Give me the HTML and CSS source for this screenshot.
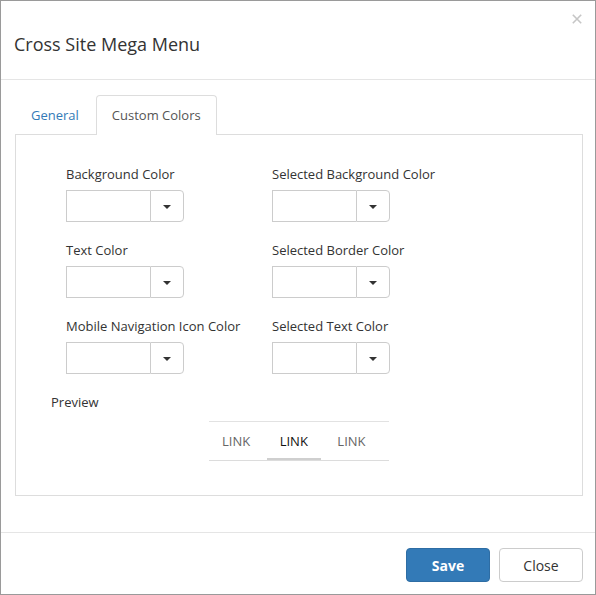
FILE: index.html
```html
<!DOCTYPE html>
<html>
<head>
<meta charset="utf-8">
<title>Cross Site Mega Menu</title>
<link rel="stylesheet" href="styles.css">
</head>
<body>
<div class="dialog">
  <div class="header">
    <h4 class="title">Cross Site Mega Menu</h4>
    <button class="close" aria-label="Close">
      <svg width="10" height="10" viewBox="0 0 10 10"><path d="M0.8 0.8 L9.2 9.2 M9.2 0.8 L0.8 9.2" stroke="#c6c6c6" stroke-width="1.6" fill="none"/></svg>
    </button>
  </div>
  <div class="body">
    <ul class="tabs">
      <li class="tab"><a href="#">General</a></li>
      <li class="tab active"><a href="#">Custom Colors</a></li>
    </ul>
    <div class="pane">
      <div class="grid">
        <div class="field">
          <label>Background Color</label>
          <div class="picker"><span class="input"></span><span class="btn"><i class="caret"></i></span></div>
        </div>
        <div class="field">
          <label>Selected Background Color</label>
          <div class="picker"><span class="input"></span><span class="btn"><i class="caret"></i></span></div>
        </div>
        <div class="field">
          <label>Text Color</label>
          <div class="picker"><span class="input"></span><span class="btn"><i class="caret"></i></span></div>
        </div>
        <div class="field">
          <label>Selected Border Color</label>
          <div class="picker"><span class="input"></span><span class="btn"><i class="caret"></i></span></div>
        </div>
        <div class="field">
          <label>Mobile Navigation Icon Color</label>
          <div class="picker"><span class="input"></span><span class="btn"><i class="caret"></i></span></div>
        </div>
        <div class="field">
          <label>Selected Text Color</label>
          <div class="picker"><span class="input"></span><span class="btn"><i class="caret"></i></span></div>
        </div>
      </div>
      <div class="preview-label">Preview</div>
      <div class="preview">
        <a class="plink">LINK</a>
        <a class="plink active">LINK</a>
        <a class="plink">LINK</a>
      </div>
    </div>
  </div>
  <div class="footer">
    <button class="b save">Save</button>
    <button class="b closebtn">Close</button>
  </div>
</div>
</body>
</html>
```
FILE: styles.css
```css
* { box-sizing: border-box; }
html, body { margin: 0; padding: 0; background: #fff; }
body {
  font-family: "Open Sans", "DejaVu Sans", sans-serif;
  font-size: 13px;
  color: #333;
}
.dialog {
  width: 596px;
  height: 595px;
  border: 1px solid #9a9a9a;
  background: #fff;
  display: flex;
  flex-direction: column;
}
.header {
  position: relative;
  padding: 30px 14px 22px 13px;
  border-bottom: 1px solid #e5e5e5;
}
.title {
  margin: 0;
  font-size: 18px;
  line-height: 26px;
  font-weight: 400;
  color: #333;
}
.close {
  position: absolute;
  top: 13px;
  right: 13px;
  width: 10px;
  height: 10px;
  padding: 0;
  border: 0;
  background: none;
  display: block;
}
.close svg { display: block; }
.body {
  flex: 1;
  padding: 15px 12px 0 14px;
}
.tabs {
  list-style: none;
  margin: 0;
  padding: 0;
  display: flex;
  border-bottom: 1px solid #ddd;
}
.tab { margin: 0 1px -1px 0; }
.tab a {
  display: block;
  padding: 10px 15px;
  line-height: 19px;
  border: 1px solid transparent;
  border-bottom: 0;
  border-radius: 4px 4px 0 0;
  text-decoration: none;
  color: #337ab7;
  height: 40px;
}
.tab.active a {
  color: #555;
  background: #fff;
  border-color: #ddd;
}
.pane {
  border: 1px solid #ddd;
  border-top: 0;
  height: 361px;
  padding: 30px 0 0 0;
}
.grid {
  display: grid;
  grid-template-columns: 206px 206px;
  padding-left: 50px;
}
.field { margin-bottom: 19px; }
.field label {
  display: block;
  line-height: 19px;
  margin-bottom: 6px;
  color: #333;
}
.picker { display: flex; height: 32px; }
.input {
  width: 84px;
  height: 32px;
  border: 1px solid #ccc;
  border-right: 0;
}
.btn {
  width: 34px;
  height: 32px;
  border: 1px solid #ccc;
  border-radius: 0 4px 4px 0;
  display: flex;
  align-items: center;
  justify-content: center;
}
.caret {
  display: block;
  width: 0;
  height: 0;
  border-top: 4px solid #333;
  border-left: 4px solid transparent;
  border-right: 4px solid transparent;
  margin-top: 1px;
}
.preview-label {
  margin: 0 0 0 35px;
  line-height: 19px;
  color: #333;
}
.preview {
  width: 180px;
  margin: 9px auto 0;
  height: 40px;
  border-top: 1px solid #e2e2e2;
  border-bottom: 1px solid #dcdcdc;
  display: flex;
  gap: 3.5px;
}
.plink {
  display: flex;
  align-items: center;
  padding: 0 13px 1px;
  color: #666;
  font-size: 13px;
  text-decoration: none;
}
.plink.active {
  color: #111;
  box-shadow: inset 0 -2px 0 #cfcfcf;
}
.footer {
  border-top: 1px solid #e5e5e5;
  padding: 15px 12px 12px 0;
  display: flex;
  justify-content: flex-end;
  gap: 9px;
}
.b {
  font-family: "Open Sans", "DejaVu Sans", sans-serif;
  font-size: 14px;
  height: 34px;
  width: 84px;
  border-radius: 4px;
  border: 1px solid #ccc;
  background: #fff;
  color: #333;
  padding: 0;
}
.save {
  background: #337ab7;
  border-color: #2e6da4;
  color: #fff;
  font-weight: 700;
}
```
